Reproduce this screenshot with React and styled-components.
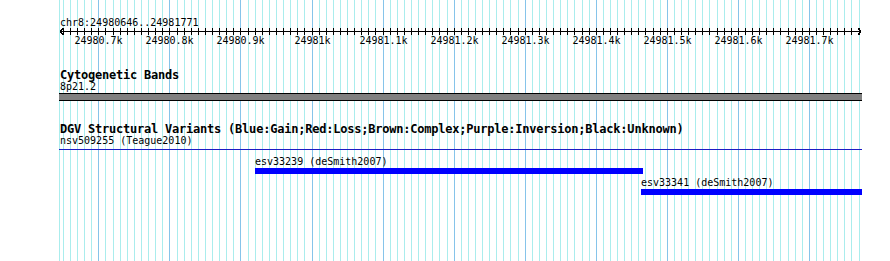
import React from 'react';
import styled, { createGlobalStyle } from 'styled-components';

const START = 24980646;
const END = 24981771;
const LEFT = 60;
const SCALE = 0.7105;

const toX = (pos) => LEFT + (pos - START) * SCALE;

const GlobalStyle = createGlobalStyle`
  html, body {
    margin: 0;
    padding: 0;
    background: #fff;
  }
  body {
    font-family: "DejaVu Sans Mono", "Liberation Mono", monospace;
    color: #000;
  }
`;

const Page = styled.div`
  position: relative;
  width: 890px;
  height: 261px;
  overflow: hidden;
  background: #fff;
`;

const GridLayer = styled.svg`
  position: absolute;
  top: 0;
  left: 0;
  z-index: 0;
`;

const Panel = styled.div`
  position: relative;
  z-index: 1;
  margin-left: 59px;
  width: 803px;
`;

const Ruler = styled.div`
  padding-top: 17px;
`;

const SmallText = styled.div`
  font-size: 10px;
  line-height: 11px;
  height: 11px;
  padding-left: 1px;
  white-space: nowrap;
`;

const Axis = styled.svg`
  display: block;
`;

const TickLabels = styled.div`
  position: relative;
  height: 11px;
`;

const TickLabel = styled.span`
  position: absolute;
  top: 0;
  font-size: 10px;
  line-height: 11px;
  transform: translateX(-50%);
  white-space: nowrap;
`;

const Track = styled.section`
  margin-top: ${(p) => p.$gap}px;
`;

const TrackTitle = styled.h3`
  margin: 0;
  padding-left: 1px;
  font-size: 12px;
  line-height: 12px;
  height: 12px;
  font-weight: bold;
  letter-spacing: -0.22px;
  white-space: nowrap;
`;

const BandBar = styled.div`
  margin-top: 1px;
  height: 8px;
  box-sizing: border-box;
  background: #808080;
  border-top: 1px solid #000;
  border-bottom: 1px solid #000;
`;

const SpanLine = styled.div`
  margin-top: 3px;
  height: 1px;
  background: #1c1cc4;
`;

const FeatureRow = styled.div`
  margin-top: ${(p) => p.$gap}px;
`;

const Feature = styled.div`
  display: flex;
  flex-direction: column;
`;

const FeatureLabel = styled.div`
  font-size: 10px;
  line-height: 11px;
  height: 11px;
  white-space: nowrap;
`;

const FeatureBar = styled.div`
  margin-top: 1px;
  height: 6px;
  background: #0000ff;
`;

const gridLines = [];
gridLines.push({ x: 59, major: false });
for (let p = Math.ceil(START / 10) * 10; p <= END; p += 10) {
  gridLines.push({ x: Math.round(toX(p)), major: p % 100 === 0 });
}

const majorTicks = [];
for (let p = Math.ceil(START / 100) * 100; p <= END; p += 100) {
  majorTicks.push(p);
}

const features = [
  { name: 'esv33239 (deSmith2007)', x1: 255, x2: 643, gap: 6 },
  { name: 'esv33341 (deSmith2007)', x1: 641, x2: 862, gap: 3 },
];

const AxisDrawing = () => (
  <Axis width="803" height="7" viewBox="0 0 803 7" shapeRendering="crispEdges">
    <rect x="1" y="3" width="801" height="1" fill="#000" />
    {gridLines.slice(1).map((g) => (
      <rect key={g.x} x={g.x - 59} y="0" width="1" height="7" fill="#000" />
    ))}
    <path d="M1 3.5 L4 0.5 M1 3.5 L4 6.5" stroke="#000" strokeWidth="1" fill="none" />
    <path d="M802 3.5 L799 0.5 M802 3.5 L799 6.5" stroke="#000" strokeWidth="1" fill="none" />
  </Axis>
);

const App = () => (
  <Page>
    <GlobalStyle />
    <GridLayer width="890" height="261" viewBox="0 0 890 261" shapeRendering="crispEdges">
      {gridLines.map((g) => (
        <rect
          key={g.x}
          x={g.x}
          y="0"
          width="1"
          height="261"
          fill={g.major ? '#86c4ea' : '#aaeded'}
        />
      ))}
    </GridLayer>
    <Panel>
      <Ruler>
        <SmallText>chr8:24980646..24981771</SmallText>
        <AxisDrawing />
        <TickLabels>
          {majorTicks.map((p) => (
            <TickLabel key={p} style={{ left: Math.round(toX(p)) - 59 + 0.5 }}>
              {(p / 1000).toFixed(1).replace(/\.0$/, '')}k
            </TickLabel>
          ))}
        </TickLabels>
      </Ruler>

      <Track $gap={23}>
        <TrackTitle>Cytogenetic Bands</TrackTitle>
        <SmallText>8p21.2</SmallText>
        <BandBar />
      </Track>

      <Track $gap={22}>
        <TrackTitle>
          DGV Structural Variants (Blue:Gain;Red:Loss;Brown:Complex;Purple:Inversion;Black:Unknown)
        </TrackTitle>
        <SmallText>nsv509255 (Teague2010)</SmallText>
        <SpanLine />
        {features.map((f) => (
          <FeatureRow key={f.name} $gap={f.gap}>
            <Feature style={{ marginLeft: f.x1 - 59, width: f.x2 - f.x1 }}>
              <FeatureLabel>{f.name}</FeatureLabel>
              <FeatureBar />
            </Feature>
          </FeatureRow>
        ))}
      </Track>
    </Panel>
  </Page>
);

export default App;
